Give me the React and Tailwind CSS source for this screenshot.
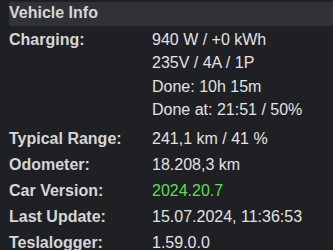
const rows = [
  { label: "Typical Range:", value: "241,1 km / 41 %" },
  { label: "Odometer:", value: "18.208,3 km" },
  { label: "Car Version:", value: "2024.20.7", green: true },
  { label: "Last Update:", value: "15.07.2024, 11:36:53" },
  { label: "Teslalogger:", value: "1.59.0.0" },
];

const charging = [
  "940 W / +0 kWh",
  "235V / 4A / 1P",
  "Done: 10h 15m",
  "Done at: 21:51 / 50%",
];

export default function App() {
  return (
    <div
      className="w-[333px] h-[250px] overflow-hidden bg-[#1f2023] pl-[9px] pt-[2px] text-[16px]"
      style={{ fontFamily: '"Liberation Sans", Arial, sans-serif' }}
    >
      {/* Header */}
      <div className="h-6 leading-[22px] bg-[#303236] font-bold text-[#d6d6d6]">
        Vehicle Info
      </div>

      {/* Charging */}
      <div className="flex pt-[2px] pb-[4px]">
        <div className="w-[143px] shrink-0 font-bold text-[#d6d6d6] leading-[23.4px]">
          Charging:
        </div>
        <div className="text-[#e2e2e2] leading-[23.4px]">
          {charging.map((line) => (
            <div key={line}>{line}</div>
          ))}
        </div>
      </div>

      {rows.map((r) => (
        <div key={r.label} className="flex leading-[26px]">
          <div className="w-[143px] shrink-0 font-bold text-[#d6d6d6]">
            {r.label}
          </div>
          <div className={r.green ? "text-[#5fdc52]" : "text-[#e2e2e2]"}>
            {r.value}
          </div>
        </div>
      ))}
    </div>
  );
}
